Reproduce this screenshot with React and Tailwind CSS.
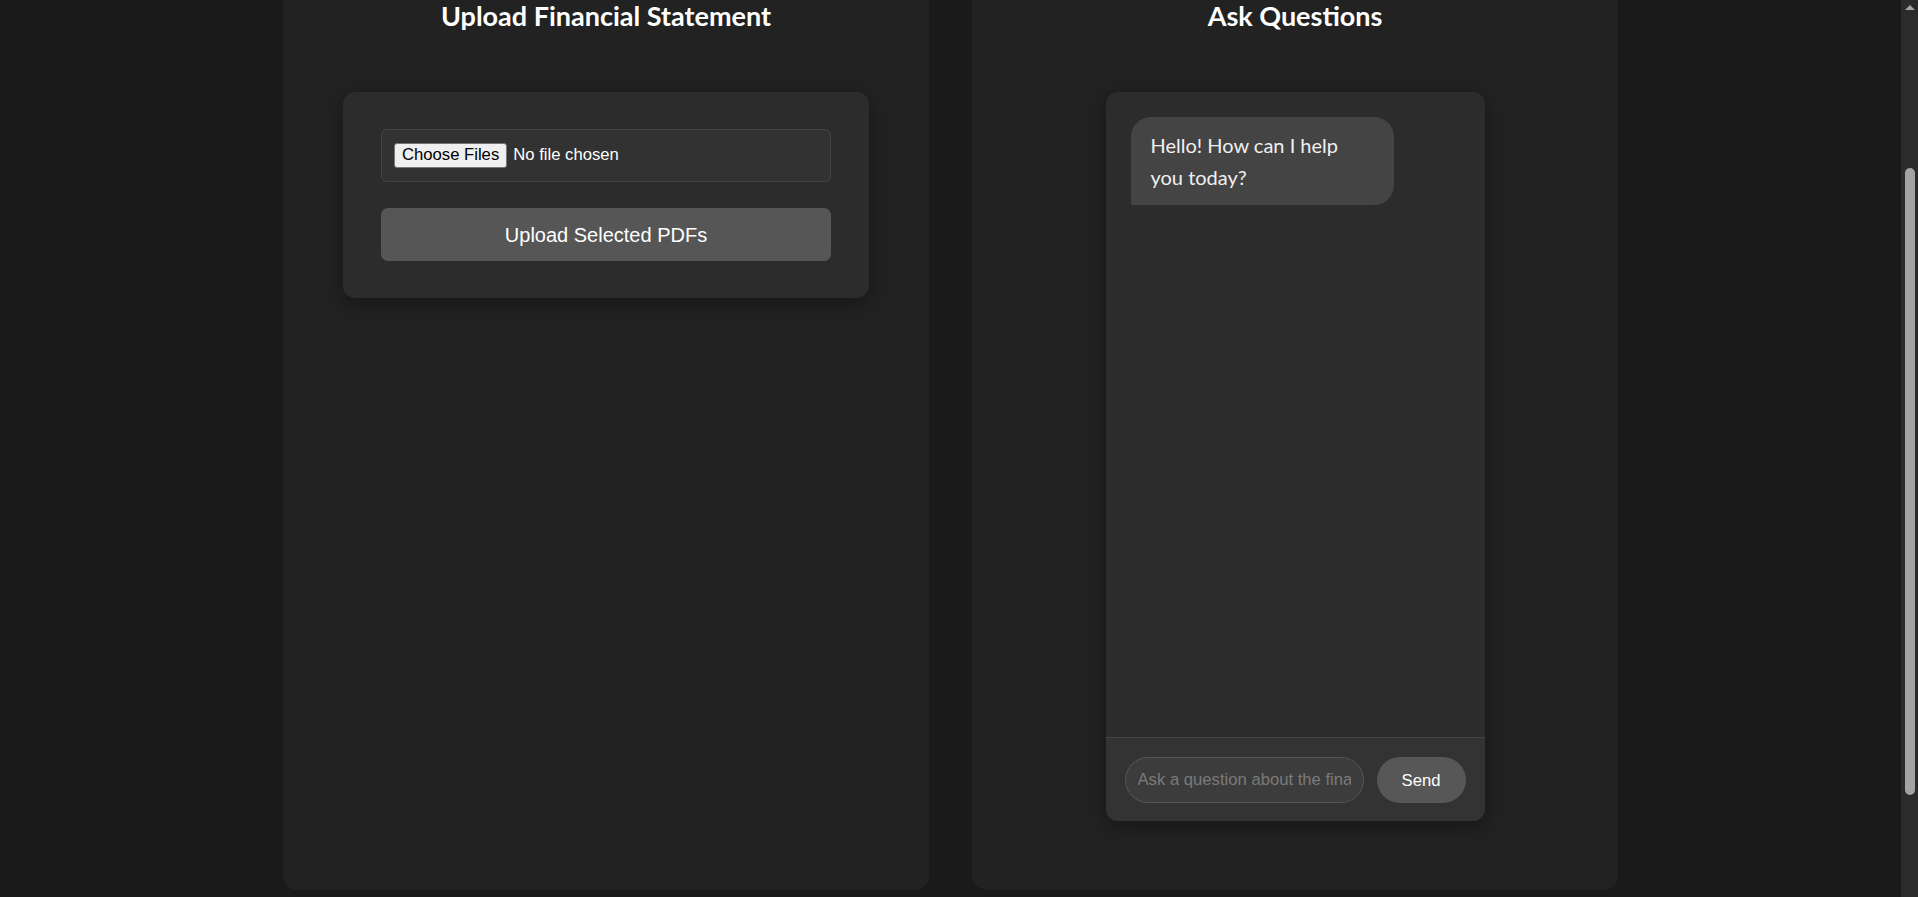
import React, { useState } from 'react'

const SANS = { fontFamily: 'Lato, "Noto Sans", sans-serif' }
const ARIAL = { fontFamily: '"Liberation Sans", Arial, sans-serif' }

const UploadPanel = () => {
  const [files, setFiles] = useState([])

  return (
    <section className="w-[646px] bg-[#222222] rounded-b-[15px] flex flex-col items-center">
      <h2 className="text-[27px] leading-[32px] font-bold text-white" style={SANS}>
        Upload Financial Statement
      </h2>

      {/* Upload card */}
      <div className="mt-[60px] w-[526px] bg-[#2c2c2c] rounded-[12px] px-[38px] pt-[37px] pb-[37px] shadow-[0_6px_20px_rgba(0,0,0,0.35)]">
        <label className="flex items-center gap-[6px] bg-[#323232] border border-[#444444] rounded-[6px] px-[12px] py-[13px] cursor-pointer" style={ARIAL}>
          <input
            type="file"
            multiple
            accept="application/pdf"
            className="hidden"
            onChange={e => setFiles(Array.from(e.target.files || []))}
          />
          <span className="h-[25px] px-[7px] flex items-center bg-[#efefef] border border-[#767676] rounded-[3px] text-[16.67px] text-black leading-none">
            Choose Files
          </span>
          <span className="text-[16.67px] text-white leading-none">
            {files.length ? `${files.length} files` : 'No file chosen'}
          </span>
        </label>

        <button
          type="button"
          className="mt-[26px] w-full h-[53px] bg-[#565656] rounded-[7px] text-white text-[20px]"
          style={ARIAL}
        >
          Upload Selected PDFs
        </button>
      </div>
    </section>
  )
}

const ChatPanel = () => {
  const [question, setQuestion] = useState('')

  return (
    <section className="w-[646px] bg-[#222222] rounded-b-[15px] flex flex-col items-center">
      <h2 className="text-[27px] leading-[32px] font-bold text-white" style={SANS}>
        Ask Questions
      </h2>

      <div className="mt-[60px] w-[379px] h-[729px] bg-[#2c2c2c] rounded-[12px] flex flex-col shadow-[0_6px_20px_rgba(0,0,0,0.35)]">
        {/* Messages */}
        <div className="flex-1 p-[25px]">
          <div
            className="w-[263px] bg-[#444444] rounded-[20px] rounded-bl-none px-[20px] py-[12px] text-[20px] leading-[32px] text-[#f0f0f0]"
            style={SANS}
          >
            Hello! How can I help<br />you today?
          </div>
        </div>

        {/* Input row */}
        <div className="flex gap-[13px] border-t border-[#444444] bg-[#333333] rounded-b-[12px] px-[19px] pt-[19px] pb-[18px]">
          <input
            value={question}
            onChange={e => setQuestion(e.target.value)}
            placeholder="Ask a question about the financial statement..."
            className="flex-1 min-w-0 h-[46px] rounded-full bg-[#3c3c3c] border border-[#555555] px-[12px] text-[16.67px] text-white placeholder:text-[#7a7a7a] outline-none"
            style={ARIAL}
          />
          <button
            type="button"
            className="h-[46px] px-[25px] rounded-full bg-[#575757] text-white text-[16.67px]"
            style={ARIAL}
          >
            Send
          </button>
        </div>
      </div>
    </section>
  )
}

export default function App() {
  return (
    <div className="flex h-[897px] overflow-hidden bg-[#1a1a1a]">
      <main className="flex-1 flex justify-center gap-[43px] pb-[7px]">
        <UploadPanel />
        <ChatPanel />
      </main>

      {/* Fake scrollbar */}
      <div className="w-[17px] bg-[#2b2b2b] flex flex-col items-center">
        <svg width="10" height="6" viewBox="0 0 10 6" className="mt-[4px]">
          <path d="M0 6 L5 1 L10 6 Z" fill="#a3a3a3" />
        </svg>
        <div className="mt-[158px] w-[10px] h-[627px] rounded-full bg-[#a3a3a3]" />
      </div>
    </div>
  )
}
